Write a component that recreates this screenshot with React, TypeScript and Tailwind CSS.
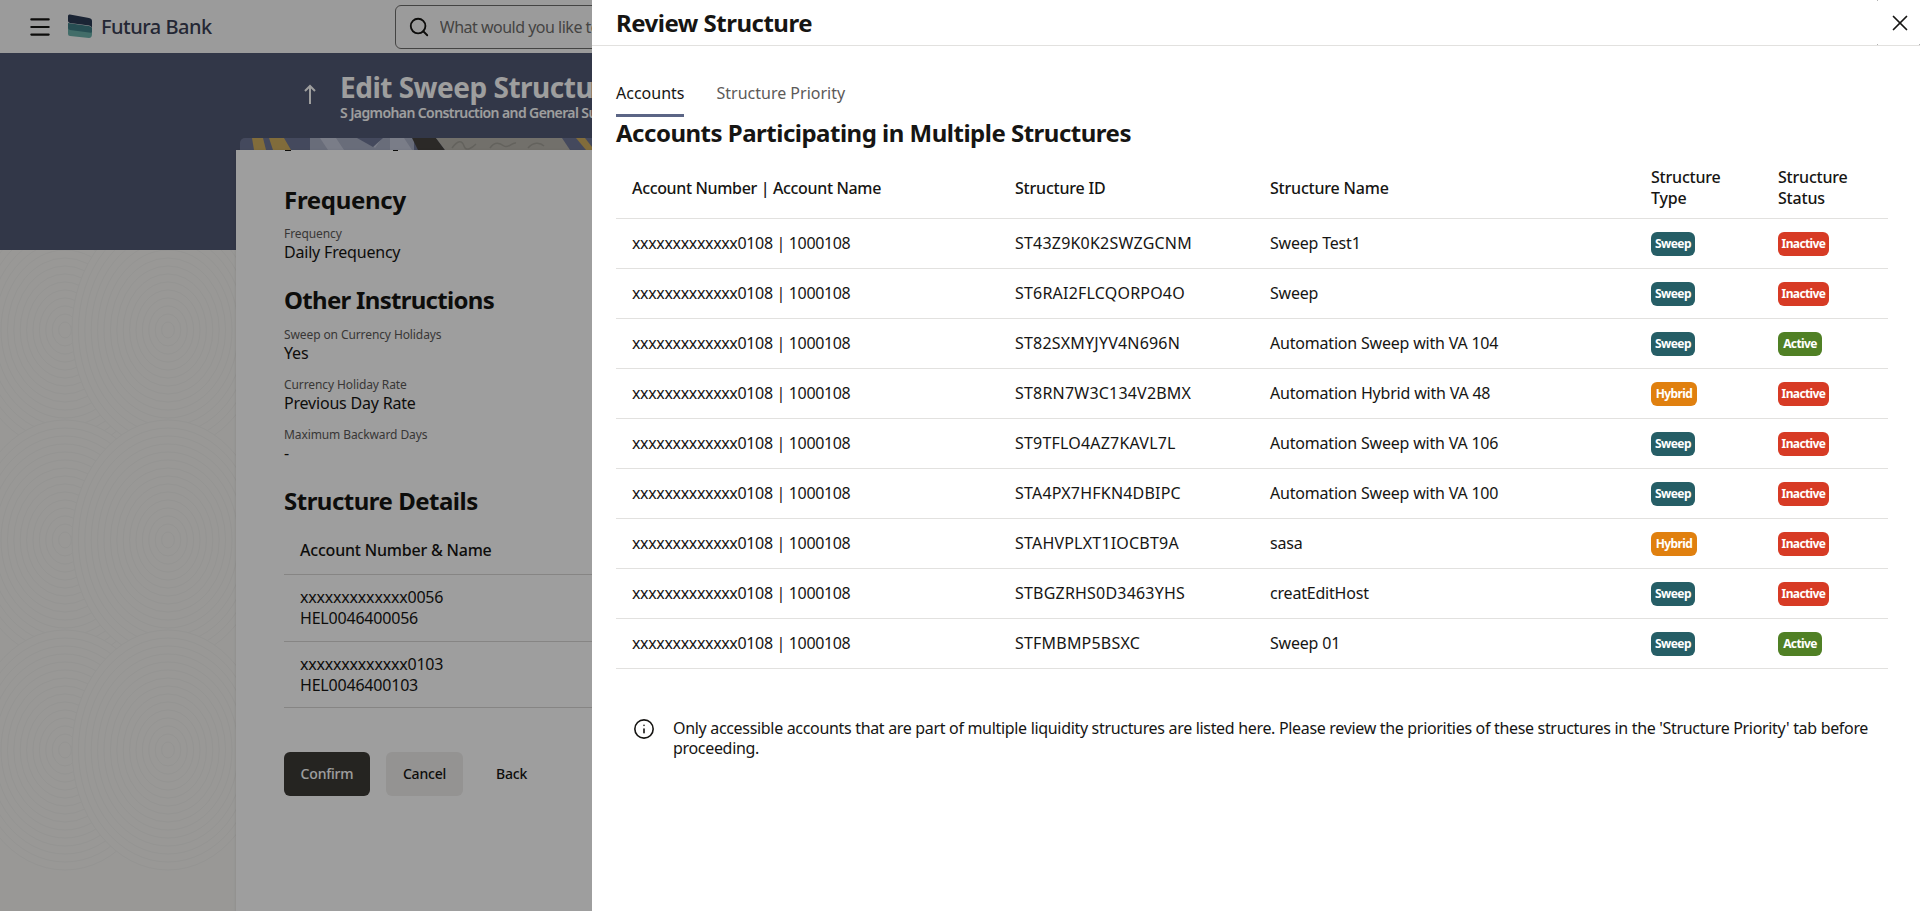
import { Search, X, Info, Menu } from 'lucide-react';

type Row = { id: string; name: string; type: 'Sweep' | 'Hybrid'; status: 'Active' | 'Inactive' };

const rows: Row[] = [
  { id: 'ST43Z9K0K2SWZGCNM', name: 'Sweep Test1', type: 'Sweep', status: 'Inactive' },
  { id: 'ST6RAI2FLCQORPO4O', name: 'Sweep', type: 'Sweep', status: 'Inactive' },
  { id: 'ST82SXMYJYV4N696N', name: 'Automation Sweep with VA 104', type: 'Sweep', status: 'Active' },
  { id: 'ST8RN7W3C134V2BMX', name: 'Automation Hybrid with VA 48', type: 'Hybrid', status: 'Inactive' },
  { id: 'ST9TFLO4AZ7KAVL7L', name: 'Automation Sweep with VA 106', type: 'Sweep', status: 'Inactive' },
  { id: 'STA4PX7HFKN4DBIPC', name: 'Automation Sweep with VA 100', type: 'Sweep', status: 'Inactive' },
  { id: 'STAHVPLXT1IOCBT9A', name: 'sasa', type: 'Hybrid', status: 'Inactive' },
  { id: 'STBGZRHS0D3463YHS', name: 'creatEditHost', type: 'Sweep', status: 'Inactive' },
  { id: 'STFMBMP5BSXC', name: 'Sweep 01', type: 'Sweep', status: 'Active' },
];

const badgeColors: Record<string, string> = {
  Sweep: 'bg-[#265e66] w-[44px]',
  Hybrid: 'bg-[#e0800f] w-[46px]',
  Active: 'bg-[#508025] w-[44px]',
  Inactive: 'bg-[#d73b25] w-[51px]',
};

function Badge({ label }: { label: string }) {
  return (
    <span className={`inline-flex h-6 items-center justify-center rounded-md text-xs font-bold tracking-[-0.6px] text-white ${badgeColors[label]}`}>
      {label}
    </span>
  );
}

function Swirls() {
  const centers = [[65, 330], [168, 330], [65, 540], [168, 540], [65, 750], [168, 750]];
  const radii = [120, 112, 104, 96, 88, 80, 72, 64, 56, 48, 40, 32, 24, 16, 8];
  return (
    <svg className="absolute left-0 top-[250px] h-[661px] w-[240px]" viewBox="0 250 240 661">
      {centers.map(([cx, cy]) =>
        radii.map((r) => (
          <ellipse key={`${cx}-${cy}-${r}`} cx={cx} cy={cy} rx={r * 0.8} ry={r} fill="#f7f6f3" stroke="#f0efec" />
        ))
      )}
    </svg>
  );
}

function Field({ label, value }: { label: string; value: string }) {
  return (
    <div className="h-[50px]">
      <div className="text-xs leading-4 tracking-[-0.1px] text-[#5c5a58]">{label}</div>
      <div className="text-base leading-5 tracking-[-0.2px] text-[#161513]">{value}</div>
    </div>
  );
}

function Strip() {
  return (
    <svg className="ml-1 block h-3 w-[352px]" viewBox="0 0 352 12" preserveAspectRatio="none">
      <path d="M0 12V5a5 5 0 0 1 5-5h347v12z" fill="#6f7796" />
      <path d="M12 0h11l3 12H14zM29 0h15l7 12H33z" fill="#d0ae60" />
      <path d="M70 0h104v12H70z" fill="#aab0c6" />
      <path d="M80 0h16l8 12H88zM126 0h16l-7 10zM150 0h14l8 12h-22z" fill="#c5cadb" />
      <path d="M117 0h26l-10 9z" fill="#6f7796" />
      <path d="M172 0h24l9 12h-27z" fill="#46433f" />
      <path d="M196 0h126l8 12H205z" fill="#b8b5ad" />
      <path d="M212 10c6-8 10-8 12-2s8 2 12-2M250 10c5-7 10-5 14-2s8-4 12-3M288 10c5-6 12-6 16-2" fill="none" stroke="#a19e96" strokeWidth="1.5" />
      <path d="M336 0h9l7 9v3h-6z" fill="#d0ae60" />
    </svg>
  );
}

export default function App() {
  return (
    <div className="relative h-[911px] w-[1920px] overflow-hidden bg-[#f7f6f3] font-['Noto_Sans',sans-serif]">
      <Swirls />

      <header className="relative flex h-[53px] items-center bg-[#fbfbfb]">
        <Menu size={26} strokeWidth={2} className="ml-[27px] text-[#161513]" />
        <svg className="ml-[15px] h-[25px] w-6" viewBox="0 0 24 25">
          <path d="M0 14h24v6q0 4-3 4L2 22q-2 0-2-2z" fill="#6bb0aa" />
          <path d="M0 9l21 3q3 .5 3 3v3q0 1-3 .5L2 16q-2-.3-2-2z" fill="#3f7f86" />
          <path d="M0 2q0-2 2-1.500l19 3.500q3 .6 3 3v8q0-3-3-3.500L2 9q-2-.3-2-2z" fill="#2a3a55" />
        </svg>
        <span className="ml-[9px] text-xl font-medium tracking-[-0.5px] text-[#3a3f55]">Futura Bank</span>
        <div className="ml-[183px] flex h-[44px] w-[600px] items-center rounded-md border border-[#6f6e6c] pl-3">
          <Search size={22} className="shrink-0 text-[#161513]" />
          <span className="ml-[10px] w-[154px] overflow-hidden whitespace-nowrap text-base tracking-[-0.5px] text-[#6f6e6c]">What would you like to do</span>
        </div>
      </header>

      <div className="relative h-[197px] bg-[#525974]">
        <div className="flex pl-[303px] pt-[17px] text-white">
          <svg className="mt-[14px] h-5 w-[14px]" viewBox="0 0 14 20" fill="none" stroke="currentColor" strokeWidth="2">
            <path d="M7 20V2M2 7l5-5 5 5" />
          </svg>
          <div className="ml-[23px]">
            <div className="text-[28px] font-bold leading-[34px] tracking-[-0.5px]">Edit Sweep Structure</div>
            <div className="text-sm font-semibold leading-[17px] tracking-[-0.6px]">S Jagmohan Construction and General Supplies</div>
          </div>
        </div>
      </div>

      <main className="relative -mt-[112px] ml-[236px] w-[1448px]">
        <Strip />
        <section className="relative h-[761px] bg-white pl-12 pt-[34px] shadow-sm">
          <div className="absolute left-[49px] top-0 h-px w-[6px] bg-[#161513]" />
          <div className="absolute left-[157px] top-0 h-px w-[5px] bg-[#161513]" />
          <h2 className="text-2xl font-bold leading-8 tracking-[-0.3px] text-[#161513]">Frequency</h2>
          <div className="mt-[10px]">
            <Field label="Frequency" value="Daily Frequency" />
          </div>
          <h2 className="mt-[8px] text-2xl font-bold leading-8 tracking-[-0.7px] text-[#161513]">Other Instructions</h2>
          <div className="mt-[11px]">
            <Field label="Sweep on Currency Holidays" value="Yes" />
            <Field label="Currency Holiday Rate" value="Previous Day Rate" />
            <Field label="Maximum Backward Days" value="-" />
          </div>
          <h2 className="mt-[8px] text-2xl font-bold leading-8 tracking-[-0.5px] text-[#161513]">Structure Details</h2>
          <div className="mt-[8px] w-[400px] text-base tracking-[-0.2px] text-[#161513]">
            <div className="flex h-[50px] items-center border-b border-[#d8d7d5] pl-4 font-medium">Account Number &amp; Name</div>
            <div className="h-[67px] border-b border-[#d8d7d5] pl-4 pt-[12px] leading-[21px]">
              <div>xxxxxxxxxxxxx0056</div>
              <div>HEL0046400056</div>
            </div>
            <div className="h-[66px] border-b border-[#d8d7d5] pl-4 pt-[12px] leading-[21px]">
              <div>xxxxxxxxxxxxx0103</div>
              <div>HEL0046400103</div>
            </div>
          </div>
          <div className="mt-[44px] flex items-center text-sm font-medium tracking-[-0.2px]">
            <button className="h-11 w-[86px] rounded-md bg-[#3d3a36] text-white">Confirm</button>
            <button className="ml-4 h-11 w-[77px] rounded-md bg-[#efeeec] text-[#161513]">Cancel</button>
            <button className="ml-[33px] text-[#161513]">Back</button>
          </div>
        </section>
      </main>

      {/* dim layer and drawer */}
      <div className="absolute inset-0 bg-black/[0.38]" />
      <aside className="absolute bottom-0 right-0 top-0 w-[1328px] bg-white text-[#161513]">
        <div className="flex h-[46px] items-center justify-between border-b border-[#e2e1df] pl-6">
          <h1 className="text-2xl font-bold tracking-[-0.5px]">Review Structure</h1>
          <div className="relative flex h-[45px] w-[43px] items-center justify-center">
            <X size={26} strokeWidth={1.6} className="ml-[2px]" />
            <span className="absolute left-0 top-0 h-px w-px bg-[#b5b5b5]" />
            <span className="absolute bottom-0 left-0 h-px w-px bg-[#b5b5b5]" />
            <span className="absolute bottom-0 right-0 h-px w-px bg-[#b5b5b5]" />
          </div>
        </div>

        <div className="mx-6 mt-[25px]">
          <div className="flex h-[46px] text-base">
            <div className="border-b-[3px] border-[#5b6585] pt-[10px]">Accounts</div>
            <div className="ml-8 pt-[10px] text-[#5c5a58]">Structure Priority</div>
          </div>
          <h2 className="text-2xl font-bold leading-8 tracking-[-0.5px]">Accounts Participating in Multiple Structures</h2>

          <table className="mt-[9px] w-[1272px] table-fixed text-left text-base tracking-[-0.2px]">
            <colgroup>
              <col className="w-[383px]" />
              <col className="w-[255px]" />
              <col className="w-[381px]" />
              <col className="w-[127px]" />
              <col className="w-[126px]" />
            </colgroup>
            <thead>
              <tr className="h-[60px] border-b border-[#e2e1df]">
                <th className="px-4 font-medium tracking-[-0.35px]">Account Number | Account Name</th>
                <th className="px-4 font-medium">Structure ID</th>
                <th className="px-4 font-medium">Structure Name</th>
                <th className="px-4 font-medium leading-[21px]">Structure Type</th>
                <th className="px-4 font-medium leading-[21px]">Structure Status</th>
              </tr>
            </thead>
            <tbody>
              {rows.map((r) => (
                <tr key={r.id} className="h-[50px] border-b border-[#e2e1df]">
                  <td className="px-4 tracking-[-0.35px]">xxxxxxxxxxxxx0108 | 1000108</td>
                  <td className="px-4 tracking-[0.2px]">{r.id}</td>
                  <td className="px-4">{r.name}</td>
                  <td className="px-4"><Badge label={r.type} /></td>
                  <td className="px-4"><Badge label={r.status} /></td>
                </tr>
              ))}
            </tbody>
          </table>

          <div className="mt-[49px] flex pl-[17px] text-base leading-5 tracking-[-0.32px]">
            <Info size={22} strokeWidth={1.75} className="shrink-0" />
            <p className="ml-[18px] w-[1210px]">
              Only accessible accounts that are part of multiple liquidity structures are listed here. Please review the priorities of these structures in the 'Structure Priority' tab before proceeding.
            </p>
          </div>
        </div>
      </aside>
    </div>
  );
}
